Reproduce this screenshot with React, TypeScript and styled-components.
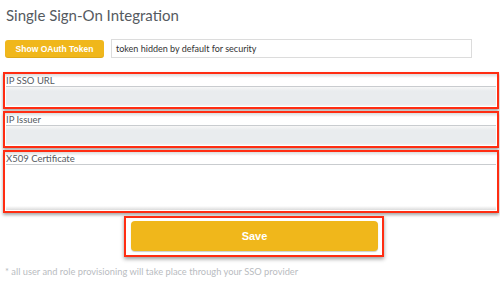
import React from "react";
import styled, { createGlobalStyle } from "styled-components";

const GlobalStyle = createGlobalStyle`
    html, body {
        margin: 0;
        padding: 0;
        background: #ffffff;
    }
    body {
        font-family: Lato, "Open Sans", sans-serif;
    }
`;

const Page = styled.div`
    width: 500px;
    height: 292px;
    box-sizing: border-box;
    padding: 5px 2px 0 3px;
    display: flex;
    flex-direction: column;
    overflow: hidden;
`;

const Title = styled.h1`
    margin: 0 0 0 3px;
    font-family: Lato, sans-serif;
    font-size: 15px;
    font-weight: 400;
    color: #555a5f;
    line-height: 20px;
`;

const TokenRow = styled.div`
    display: flex;
    align-items: center;
    gap: 7px;
    margin: 14px 0 0 2px;
    height: 19px;
`;

const SmallButton = styled.button`
    width: 99px;
    height: 18px;
    border: none;
    border-radius: 3px;
    background: #f0b71b;
    color: #ffffff;
    font-family: "Liberation Sans", Arial, sans-serif;
    font-size: 8.5px;
    font-weight: 700;
    padding: 0;
    box-shadow: inset 0 -1px 0 rgba(0, 0, 0, 0.08);
`;

const TokenInput = styled.div`
    width: 361px;
    height: 19px;
    box-sizing: border-box;
    border: 1px solid #dcdcdc;
    background: #fff;
    font-family: Lato, sans-serif;
    font-size: 9px;
    color: #333;
    line-height: 17px;
    padding-left: 4px;
`;

const Fields = styled.div`
    display: flex;
    flex-direction: column;
    gap: 2px;
    margin-top: 14px;
`;

const Highlight = styled.div<{ $tall?: boolean }>`
    box-sizing: border-box;
    width: 496px;
    height: ${(p) => (p.$tall ? "63px" : "37px")};
    border: 2px solid #ff2d12;
    box-shadow: 0 2px 3px rgba(0, 0, 0, 0.35);
    display: flex;
    flex-direction: column;
    background: linear-gradient(#dcdcdc, #ffffff 4px);
`;

const FieldLabel = styled.div`
    font-family: Lato, sans-serif;
    font-size: 9.5px;
    color: #555a5f;
    line-height: 11px;
    height: 11px;
    padding-left: 1px;
    margin-top: 1px;
`;

const FieldInput = styled.div<{ $white?: boolean }>`
    flex: 1;
    margin: 0 1px 1px 1px;
    border-top: 1px solid #c9cccf;
    background: ${(p) =>
        p.$white
            ? "linear-gradient(#ffffff, #ffffff calc(100% - 4px), #dcdcdc)"
            : "linear-gradient(#f7f7f7, #e9ecee 4px, #e9ecee calc(100% - 2px), #f5f5f5)"};
`;

const SaveWrap = styled.div`
    align-self: center;
    margin: 3px 0 0 7px;
    box-sizing: border-box;
    width: 260px;
    height: 41px;
    border: 2px solid #ff2d12;
    box-shadow: 0 2px 4px rgba(0, 0, 0, 0.4);
    padding: 3px 4px 4px 5px;
    display: flex;
`;

const SaveButton = styled.button`
    flex: 1;
    border: none;
    border-radius: 4px;
    background: #f0b71b;
    box-shadow: 0 1px 1px rgba(0, 0, 0, 0.2);
    color: #ffffff;
    font-family: "Liberation Sans", Arial, sans-serif;
    font-size: 11px;
    font-weight: 700;
    padding: 0;
`;

const Footnote = styled.p`
    margin: 9px 0 0 2px;
    font-family: Lato, sans-serif;
    font-size: 9.3px;
    color: #b9bcbf;
    line-height: 12px;
`;

const fields = [
    { label: "IP SSO URL" },
    { label: "IP Issuer" },
    { label: "X509 Certificate", tall: true },
];

export default function App(): JSX.Element {
    return (
        <>
            <GlobalStyle />
            <Page>
                <Title>Single Sign-On Integration</Title>
                <TokenRow>
                    <SmallButton>Show OAuth Token</SmallButton>
                    <TokenInput>token hidden by default for security</TokenInput>
                </TokenRow>
                <Fields>
                    {fields.map((f) => (
                        <Highlight key={f.label} $tall={f.tall}>
                            <FieldLabel>{f.label}</FieldLabel>
                            <FieldInput $white={f.tall} />
                        </Highlight>
                    ))}
                </Fields>
                <SaveWrap>
                    <SaveButton>Save</SaveButton>
                </SaveWrap>
                <Footnote>* all user and role provisioning will take place through your SSO provider</Footnote>
            </Page>
        </>
    );
}
